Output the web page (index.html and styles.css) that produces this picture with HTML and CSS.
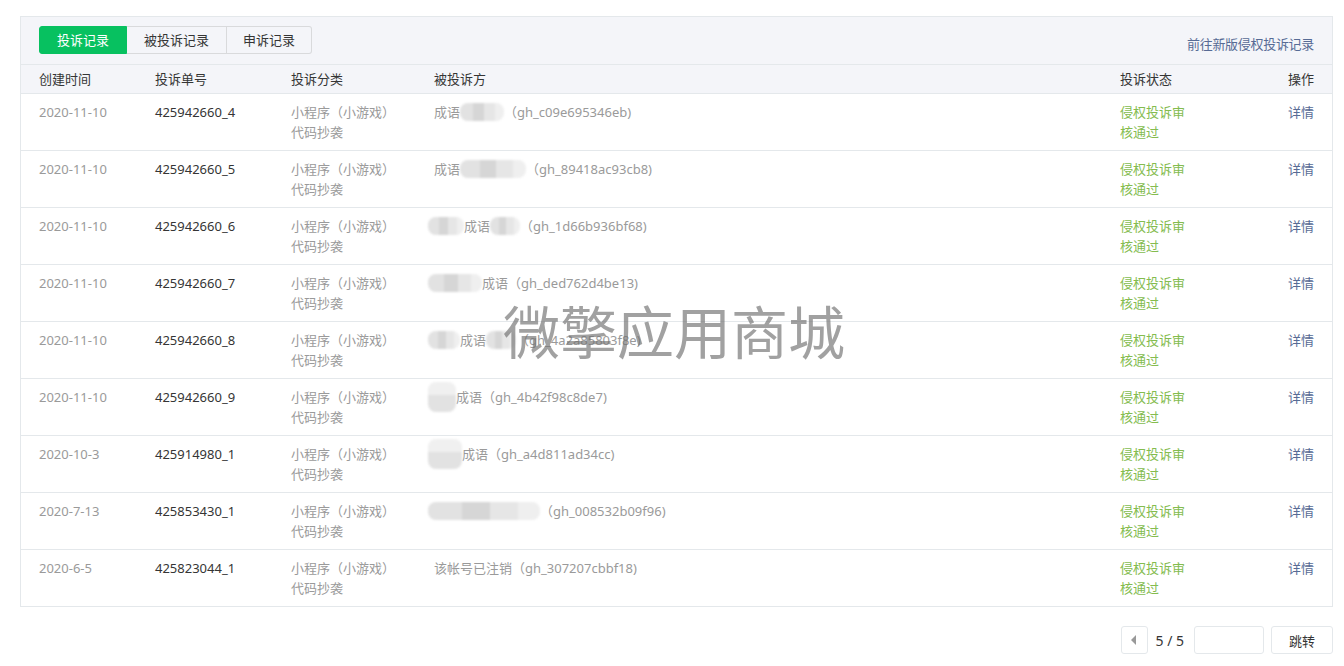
FILE: index.html
```html
<!DOCTYPE html>
<html lang="zh-CN">
<head>
    <meta charset="UTF-8">
    <meta name="viewport" content="width=device-width, initial-scale=1.0">
    <title>投诉记录</title>
    <link rel="stylesheet" href="styles.css">
</head>
<body>
    <div class="panel">
        <div class="toolbar">
            <div class="tabs">
                <a class="tab active">投诉记录</a>
                <a class="tab">被投诉记录</a>
                <a class="tab">申诉记录</a>
            </div>
            <a class="new-link">前往新版侵权投诉记录</a>
        </div>

        <div class="row head">
            <div>创建时间</div>
            <div>投诉单号</div>
            <div>投诉分类</div>
            <div>被投诉方</div>
            <div>投诉状态</div>
            <div class="op">操作</div>
        </div>

        <!-- rows are filled in below -->
        <div id="list"></div>
    </div>

    <div class="pager">
        <button class="prev"><span class="arrow"></span></button>
        <span class="pages">5 / 5</span>
        <input type="text" class="jump-input">
        <button class="jump">跳转</button>
    </div>

    <div class="watermark">微擎应用商城</div>

    <script>
        // masked account names: [blob width, text, blob width, tall blob]
        const records = [
            { date: '2020-11-10', id: '425942660_4', name: [0, '成语', 44], gh: 'gh_c09e695346eb' },
            { date: '2020-11-10', id: '425942660_5', name: [0, '成语', 66], gh: 'gh_89418ac93cb8' },
            { date: '2020-11-10', id: '425942660_6', name: [36, '成语', 30], gh: 'gh_1d66b936bf68' },
            { date: '2020-11-10', id: '425942660_7', name: [54, '成语', 0], gh: 'gh_ded762d4be13' },
            { date: '2020-11-10', id: '425942660_8', name: [32, '成语', 30], gh: 'gh_4a2a85803f8e' },
            { date: '2020-11-10', id: '425942660_9', name: [28, '成语', 0, true], gh: 'gh_4b42f98c8de7' },
            { date: '2020-10-3', id: '425914980_1', name: [34, '成语', 0, true], gh: 'gh_a4d811ad34cc' },
            { date: '2020-7-13', id: '425853430_1', name: [112, '', 0], gh: 'gh_008532b09f96' },
            { date: '2020-6-5', id: '425823044_1', name: [0, '该帐号已注销', 0], gh: 'gh_307207cbbf18' }
        ];

        const blob = (w, tall, lead) =>
            w ? `<span class="mask${tall ? ' tall' : ''}${lead ? ' lead' : ''}" style="width:${w}px"></span>` : '';

        const list = document.getElementById('list');
        list.innerHTML = records.map(r => {
            const [w1, text, w2, tall] = r.name;
            return `
            <div class="row">
                <div class="date">${r.date}</div>
                <div class="num">${r.id}</div>
                <div class="grey">小程序（小游戏）<br>代码抄袭</div>
                <div class="grey">${blob(w1, tall, true)}${text}${blob(w2)}（${r.gh})</div>
                <div class="status">侵权投诉审<br>核通过</div>
                <div class="op"><a class="detail">详情</a></div>
            </div>`;
        }).join('');
    </script>
</body>
</html>
```

FILE: styles.css
```css
body {
    margin: 0;
    background: #fff;
    font-family: "Noto Sans", "Noto Sans CJK SC", sans-serif;
    font-size: 13px;
    color: #353535;
    position: relative;
}
a {
    cursor: pointer;
}
.panel {
    margin: 16px 11px 0 20px;
    border: 1px solid #e4e8eb;
}
.toolbar {
    display: flex;
    justify-content: space-between;
    align-items: center;
    background: #f4f5f9;
    padding: 9px 18px 10px 18px;
    border-bottom: 1px solid #e4e8eb;
}
.tabs {
    display: flex;
}
.tab {
    height: 26px;
    line-height: 26px;
    padding: 0 16px;
    border: 1px solid #d9dadc;
    border-left: 0;
    font-size: 13px;
    color: #353535;
}
.tab:nth-child(2) {
    padding: 0 17px;
}
.tab:first-child {
    border-left: 1px solid #d9dadc;
    border-radius: 3px 0 0 3px;
    width: 54px;
    text-align: center;
}
.tab:last-child {
    border-radius: 0 3px 3px 0;
}
.tab.active {
    background: #07c160;
    border-color: #07c160;
    color: #fff;
}
.new-link {
    color: #576b95;
    padding-top: 6px;
    letter-spacing: -0.3px;
}
.row {
    display: grid;
    grid-template-columns: 116px 136px 143px 686px 1fr auto;
    padding: 8px 18px;
    line-height: 20px;
    border-bottom: 1px solid #e4e8eb;
}
.row:last-child {
    border-bottom: 0;
}
.row.head {
    background: #f4f5f9;
    padding: 4px 18px;
    color: #353535;
}
.op {
    text-align: right;
}
.date, .grey {
    color: #9a9a9a;
}
.num {
    color: #353535;
}
.status {
    color: #84bc4f;
}
.detail {
    color: #576b95;
}
.mask {
    display: inline-block;
    height: 18px;
    vertical-align: -4px;
    border-radius: 8px;
    background: linear-gradient(90deg, #e2e2e2 0 30%, #d6d6d6 30% 55%, #e6e6e6 55% 80%, #efefef 80%);
    filter: blur(1px);
}
.mask.lead {
    margin-left: -6px;
}
.mask.tall {
    height: 30px;
    vertical-align: -10px;
    margin-top: -10px;
    background: linear-gradient(180deg, #f0f0f0 0 45%, #e2e2e2 45%);
}
.pager {
    display: flex;
    justify-content: flex-end;
    align-items: center;
    margin: 19px 11px 0 0;
}
.prev {
    width: 27px;
    height: 28px;
    border: 1px solid #e4e8eb;
    border-radius: 3px;
    background: #fff;
    padding: 0;
    display: flex;
    align-items: center;
    justify-content: center;
}
.arrow {
    width: 0;
    height: 0;
    border-top: 5px solid transparent;
    border-bottom: 5px solid transparent;
    border-right: 5px solid #999;
    margin-right: 2px;
}
.pages {
    margin: 0 10px 0 7px;
    font-size: 14px;
    color: #353535;
}
.jump-input {
    width: 68px;
    height: 26px;
    border: 1px solid #e4e8eb;
    border-radius: 3px;
    padding: 0;
    margin-right: 7px;
}
.jump {
    width: 62px;
    height: 28px;
    border: 1px solid #e4e8eb;
    border-radius: 3px;
    background: #fff;
    font-family: "Noto Sans CJK SC", sans-serif;
    font-size: 13px;
    color: #353535;
}
.watermark {
    position: absolute;
    left: 503px;
    top: 291px;
    font-family: "Noto Sans CJK SC", sans-serif;
    font-size: 57px;
    line-height: 76px;
    color: rgba(110, 110, 110, 0.65);
    pointer-events: none;
}
```
